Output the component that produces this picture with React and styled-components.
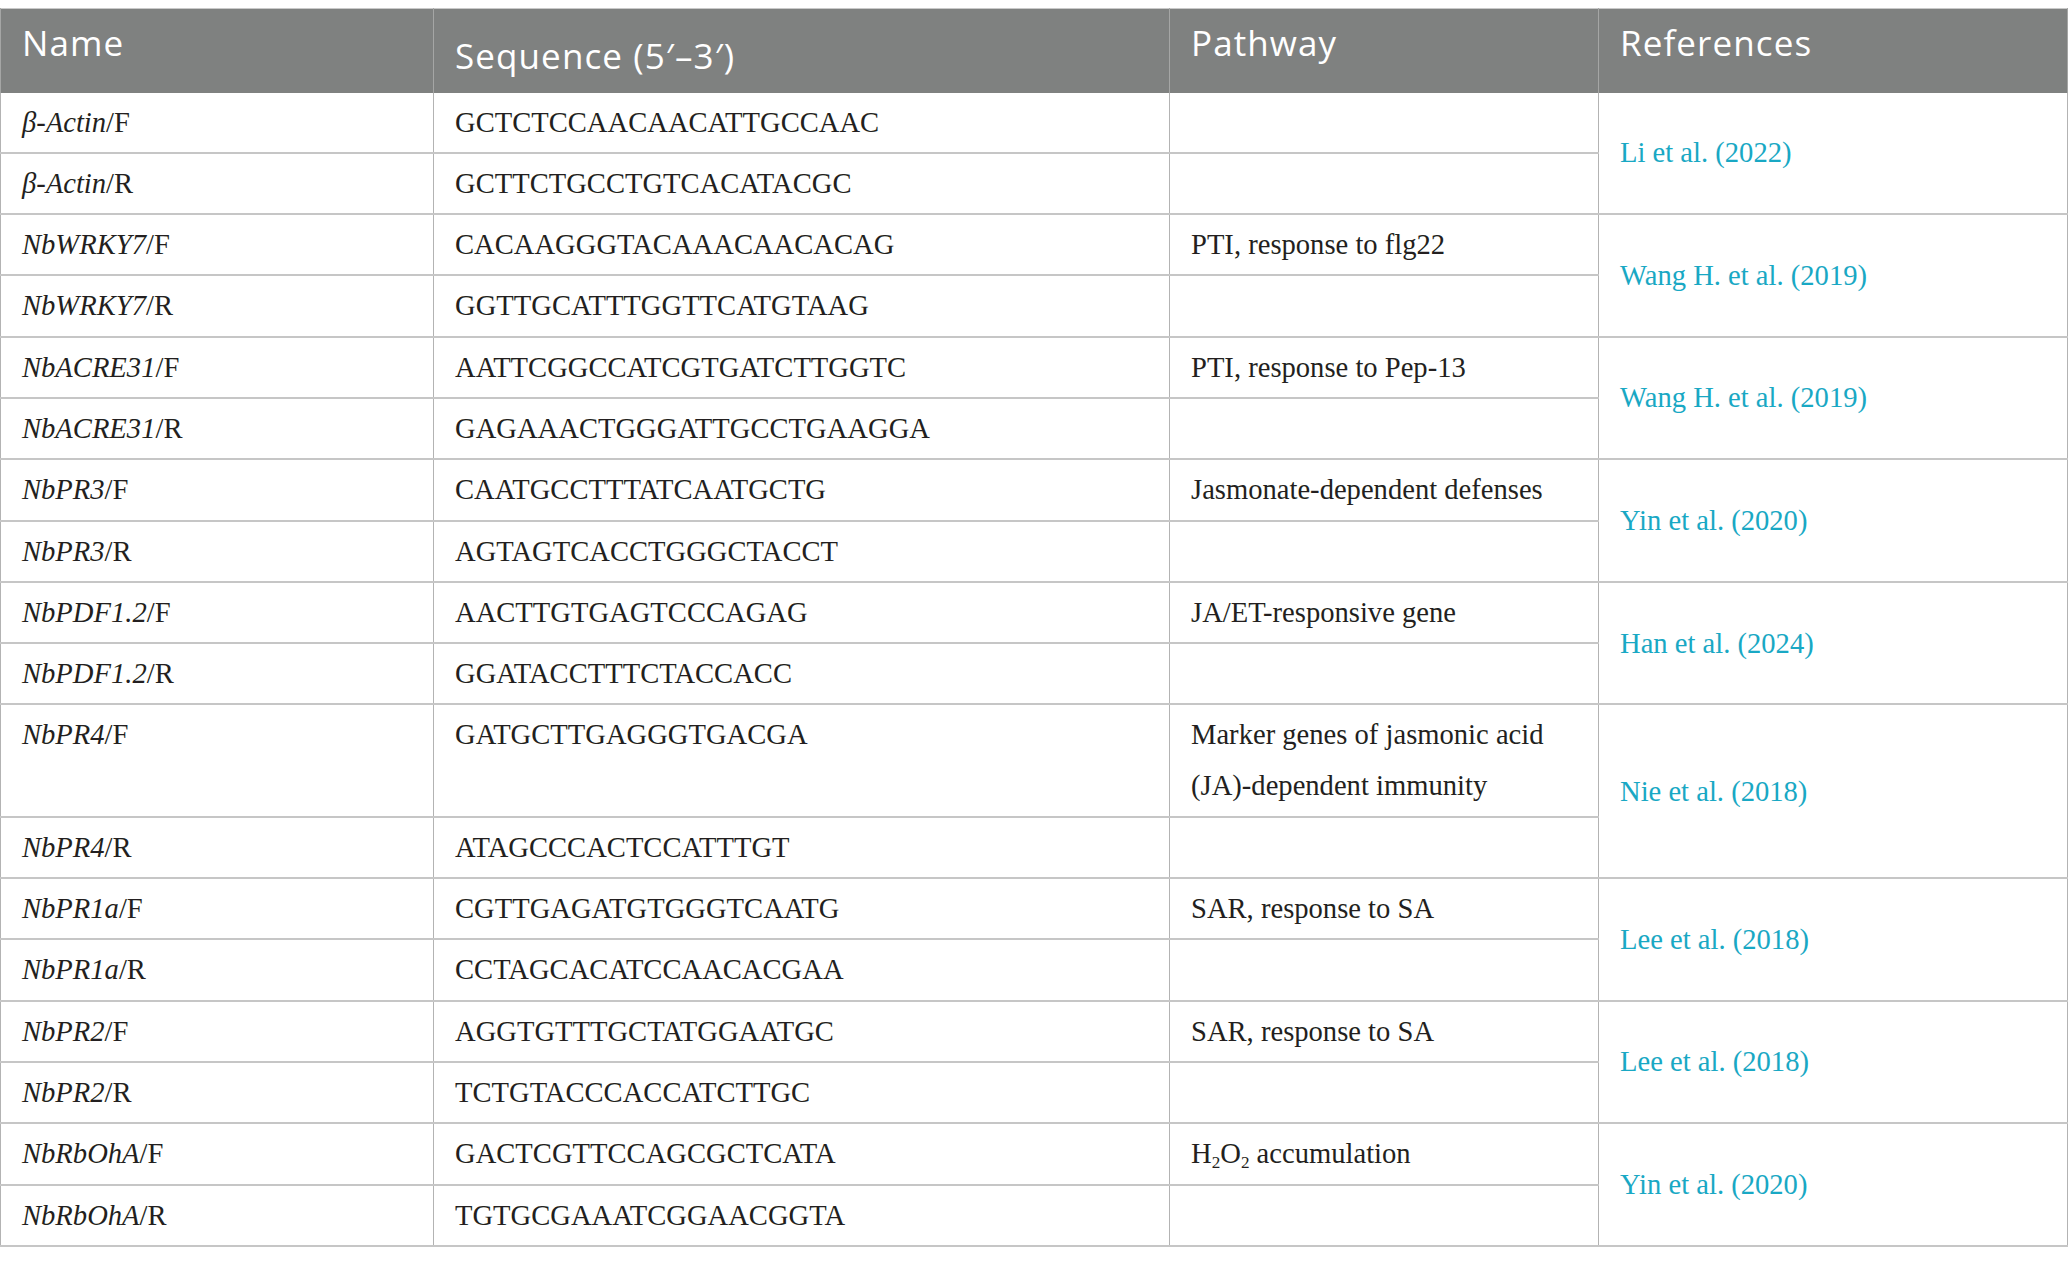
import styled, { createGlobalStyle } from "styled-components";

const GlobalStyle = createGlobalStyle`
  html, body {
    margin: 0;
    padding: 0;
    background: #ffffff;
  }
`;

const Page = styled.div`
  padding-top: 8px;
  width: 2067px;
`;

const Table = styled.table`
  width: 2067px;
  table-layout: fixed;
  border-collapse: collapse;
  border-top: 1px solid #c9c9c9;
  border-left: 1px solid #b3b3b3;
  border-right: 1px solid #b3b3b3;
`;

const Head = styled.th`
  height: 84px;
  box-sizing: border-box;
  padding: ${(p) => (p.$drop ? "24px" : "11px")} 20px 0 21px;
  background: #7f8180;
  color: #ffffff;
  font-family: "Open Sans", "Liberation Sans", sans-serif;
  font-weight: 400;
  font-size: 35px;
  letter-spacing: 1.1px;
  line-height: 45px;
  text-align: left;
  vertical-align: top;
  border-left: 1px solid #a5a6a5;
  border-right: 1px solid #a5a6a5;
`;

const Cell = styled.td`
  padding: 4px 20px 4.3px 21px;
  font-family: "Liberation Serif", "DejaVu Serif", serif;
  font-size: 28.6px;
  line-height: 51px;
  color: #231f20;
  text-align: left;
  vertical-align: top;
  border-bottom: 2px solid #c6c6c6;
  border-left: 1px solid #b3b3b3;
  border-right: 1px solid #b3b3b3;
`;

const RefCell = styled(Cell)`
  vertical-align: middle;
`;

const RefLink = styled.span`
  color: #19a8c4;
`;

const Gene = styled.i`
  font-style: italic;
`;

const Sub = styled.sub`
  font-size: 0.6em;
  line-height: 0;
  vertical-align: -0.3em;
`;

const primers = [
  { gene: "β-Actin", dir: "F", seq: "GCTCTCCAACAACATTGCCAAC", path: "", ref: "Li et al. (2022)" },
  { gene: "β-Actin", dir: "R", seq: "GCTTCTGCCTGTCACATACGC", path: "" },
  { gene: "NbWRKY7", dir: "F", seq: "CACAAGGGTACAAACAACACAG", path: "PTI, response to flg22", ref: "Wang H. et al. (2019)" },
  { gene: "NbWRKY7", dir: "R", seq: "GGTTGCATTTGGTTCATGTAAG", path: "" },
  { gene: "NbACRE31", dir: "F", seq: "AATTCGGCCATCGTGATCTTGGTC", path: "PTI, response to Pep-13", ref: "Wang H. et al. (2019)" },
  { gene: "NbACRE31", dir: "R", seq: "GAGAAACTGGGATTGCCTGAAGGA", path: "" },
  { gene: "NbPR3", dir: "F", seq: "CAATGCCTTTATCAATGCTG", path: "Jasmonate-dependent defenses", ref: "Yin et al. (2020)" },
  { gene: "NbPR3", dir: "R", seq: "AGTAGTCACCTGGGCTACCT", path: "" },
  { gene: "NbPDF1.2", dir: "F", seq: "AACTTGTGAGTCCCAGAG", path: "JA/ET-responsive gene", ref: "Han et al. (2024)" },
  { gene: "NbPDF1.2", dir: "R", seq: "GGATACCTTTCTACCACC", path: "" },
  {
    gene: "NbPR4",
    dir: "F",
    seq: "GATGCTTGAGGGTGACGA",
    path: (
      <>
        Marker genes of jasmonic acid
        <br />
        (JA)-dependent immunity
      </>
    ),
    ref: "Nie et al. (2018)",
  },
  { gene: "NbPR4", dir: "R", seq: "ATAGCCCACTCCATTTGT", path: "" },
  { gene: "NbPR1a", dir: "F", seq: "CGTTGAGATGTGGGTCAATG", path: "SAR, response to SA", ref: "Lee et al. (2018)" },
  { gene: "NbPR1a", dir: "R", seq: "CCTAGCACATCCAACACGAA", path: "" },
  { gene: "NbPR2", dir: "F", seq: "AGGTGTTTGCTATGGAATGC", path: "SAR, response to SA", ref: "Lee et al. (2018)" },
  { gene: "NbPR2", dir: "R", seq: "TCTGTACCCACCATCTTGC", path: "" },
  {
    gene: "NbRbOhA",
    dir: "F",
    seq: "GACTCGTTCCAGCGCTCATA",
    path: (
      <>
        H<Sub>2</Sub>O<Sub>2</Sub> accumulation
      </>
    ),
    ref: "Yin et al. (2020)",
  },
  { gene: "NbRbOhA", dir: "R", seq: "TGTGCGAAATCGGAACGGTA", path: "" },
];

export default function App() {
  return (
    <Page>
      <GlobalStyle />
      <Table>
        <colgroup>
          <col style={{ width: 433 }} />
          <col style={{ width: 736 }} />
          <col style={{ width: 429 }} />
          <col style={{ width: 469 }} />
        </colgroup>
        <thead>
          <tr>
            <Head>Name</Head>
            <Head $drop>Sequence (5′–3′)</Head>
            <Head>Pathway</Head>
            <Head>References</Head>
          </tr>
        </thead>
        <tbody>
          {primers.map((p, i) => (
            <tr key={i}>
              <Cell>
                <Gene>{p.gene}</Gene>/{p.dir}
              </Cell>
              <Cell>{p.seq}</Cell>
              <Cell>{p.path}</Cell>
              {p.ref && (
                <RefCell rowSpan={2}>
                  <RefLink>{p.ref}</RefLink>
                </RefCell>
              )}
            </tr>
          ))}
        </tbody>
      </Table>
    </Page>
  );
}
